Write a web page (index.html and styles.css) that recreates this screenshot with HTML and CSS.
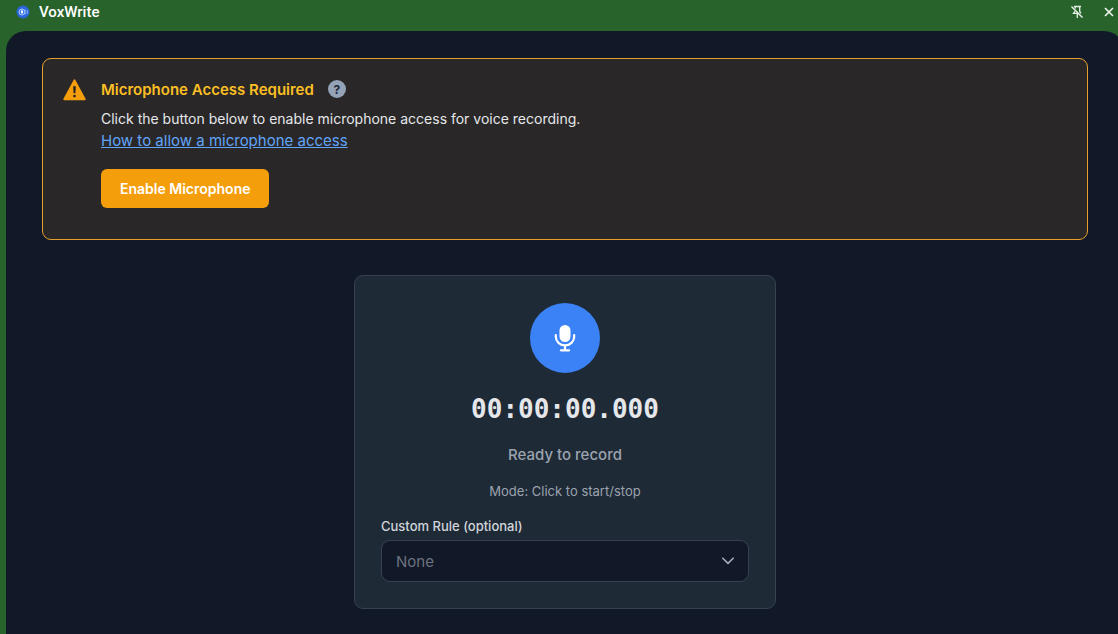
FILE: index.html
```html
<!DOCTYPE html>
<html lang="en">
  <head>
    <meta charset="utf-8" />
    <meta name="viewport" content="width=device-width, initial-scale=1" />
    <title>VoxWrite</title>
    <link rel="stylesheet" href="styles.css">
  </head>
  <body>
    <header class="titlebar">
      <svg class="logo" viewBox="0 0 14 14" aria-hidden="true">
        <circle cx="7" cy="7" r="6.5" fill="#2b66dc" />
        <circle cx="6" cy="7" r="3" fill="#3f7bea" stroke="#a9c8fa" stroke-width="1" />
        <rect x="5" y="5.2" width="2" height="3.4" rx="1" fill="#fff" />
        <path d="M9.8 4.5v5M11.6 5.2v3.6" stroke="#8bb4f8" stroke-width="0.8" fill="none" />
      </svg>
      <span class="app-name">VoxWrite</span>
      <button class="bar-button" type="button" aria-label="Unpin">
        <svg width="14" height="14" viewBox="0 0 14 14" fill="none" stroke="#e6efe6" stroke-width="1.3">
          <path d="M4 1.5h7M5.3 1.5v2M9.7 1.5v5l1.3 1.8M5 6.3L3.5 8.3h4.8M7.3 8.3v4.7" />
          <path d="M1.5 1.5l11 11" stroke-width="1.5" />
        </svg>
      </button>
      <button class="bar-button" type="button" aria-label="Close">
        <svg width="10" height="10" viewBox="0 0 10 10" stroke="#f2f7f2" stroke-width="1.6">
          <path d="M1 1l8 8M9 1l-8 8" />
        </svg>
      </button>
    </header>

    <main class="panel">
      <section class="notice">
        <svg class="warning" viewBox="0 0 22 21" aria-hidden="true">
          <path d="M11 1.3L20.7 19.3H1.3z" fill="#f59e0b" stroke="#f59e0b" stroke-width="2" stroke-linejoin="round" />
          <path d="M9.7 7h2.6l-.4 6.6h-1.8z" fill="#292524" />
          <circle cx="11" cy="16.3" r="1.3" fill="#292524" />
        </svg>
        <div class="notice-body">
          <div class="notice-head">
            <h2>Microphone Access Required</h2>
            <button class="help" type="button">?</button>
          </div>
          <p>Click the button below to enable microphone access for voice recording.</p>
          <a class="help-link" href="#">How to allow a microphone access</a>
          <button class="enable" type="button">Enable Microphone</button>
        </div>
      </section>

      <section class="recorder">
        <button class="record" type="button" aria-label="Record">
          <svg width="22" height="28" viewBox="0 0 22 28" fill="none" stroke="#fff" stroke-width="2.2" stroke-linecap="round">
            <rect x="5.5" y="1" width="11" height="17" rx="5.5" fill="#fff" stroke="none" />
            <path d="M1.8 11v1.8a9.2 8.6 0 0 0 18.4 0V11M11 21.5v4.5M6.9 26.3h8.2" />
          </svg>
        </button>
        <div class="timer">00:00:00.000</div>
        <div class="status">Ready to record</div>
        <div class="mode">Mode: Click to start/stop</div>
        <label for="rule">Custom Rule (optional)</label>
        <div class="select-wrap">
          <select id="rule">
            <option>None</option>
          </select>
          <svg class="chevron" width="14" height="8" viewBox="0 0 14 8" fill="none" stroke="#a5adba" stroke-width="1.6" stroke-linecap="round" stroke-linejoin="round">
            <path d="M1.8 1.2L7 6.4l5.2-5.2" />
          </svg>
        </div>
      </section>
    </main>
  </body>
</html>
```

FILE: styles.css
```css
* {
  box-sizing: border-box;
}

body {
  display: flex;
  flex-direction: column;
  min-height: 100vh;
  margin: 0;
  overflow: hidden;
  background-color: #28632c;
  font-family: Inter, "Liberation Sans", sans-serif;
  color: #e5e7eb;
}

button {
  padding: 0;
  border: none;
  font-family: inherit;
  cursor: pointer;
}

.titlebar {
  display: flex;
  align-items: center;
  height: 31px;
  padding: 0 4px 7px 16px;
}

.logo {
  width: 14px;
  height: 14px;
}

.app-name {
  flex: 1;
  margin-left: 9px;
  font-family: Roboto, "Liberation Sans", sans-serif;
  font-size: 15px;
  font-weight: 500;
  color: #fff;
}

.bar-button {
  display: flex;
  margin-left: 20px;
  background: none;
}

/* the right edge runs under the window frame */
.panel {
  flex: 1;
  margin: 0 -6px 0 6px;
  padding: 27px 36px 25px;
  border-radius: 20px 20px 0 0;
  background-color: #111827;
}

.notice {
  display: flex;
  gap: 15px;
  padding: 20px 20px 31px;
  border: 1px solid #e5a02c;
  border-radius: 9px;
  background-color: #292727;
}

.warning {
  width: 23px;
  height: 22px;
}

.notice-body {
  display: flex;
  flex-direction: column;
  align-items: flex-start;
}

.notice-head {
  display: flex;
  align-items: center;
  gap: 14px;
  height: 20px;
}

.notice h2 {
  margin: 0;
  font-size: 15px;
  font-weight: 600;
  color: #fbbf24;
}

.help {
  width: 18px;
  height: 18px;
  border-radius: 50%;
  background-color: #94a3b8;
  font-size: 12px;
  font-weight: 700;
  color: #1f2937;
}

.notice p {
  margin: 9px 0 0;
  font-size: 14px;
  line-height: 22px;
}

.help-link {
  font-size: 15px;
  line-height: 22px;
  color: #60a5fa;
}

.enable {
  margin-top: 17px;
  padding: 0 19px;
  border-radius: 6px;
  background-color: #f59e0b;
  font-size: 14px;
  font-weight: 600;
  line-height: 39px;
  color: #fff;
}

.recorder {
  display: flex;
  flex-direction: column;
  align-items: center;
  max-width: 422px;
  margin: 35px auto 0;
  padding: 27px 26px 26px;
  border: 1px solid #374151;
  border-radius: 9px;
  background-color: #1e2a36;
}

.record {
  display: flex;
  align-items: center;
  justify-content: center;
  width: 70px;
  height: 70px;
  border-radius: 50%;
  background-color: #3b82f6;
}

.timer {
  margin-top: 18px;
  font-family: "DejaVu Sans Mono", monospace;
  font-size: 26px;
  font-weight: 700;
  line-height: 36px;
}

.status {
  margin-top: 17px;
  font-size: 15px;
  font-weight: 500;
  line-height: 22px;
  color: #9ca3af;
}

.mode {
  margin-top: 15px;
  font-size: 13px;
  line-height: 20px;
  color: #9ca3af;
}

.recorder label {
  align-self: flex-start;
  margin-top: 15px;
  font-size: 13px;
  font-weight: 500;
  line-height: 20px;
  color: #d1d5db;
}

.select-wrap {
  display: grid;
  align-items: center;
  width: 100%;
  margin-top: 4px;
}

.select-wrap select,
.chevron {
  grid-area: 1 / 1;
}

.select-wrap select {
  width: 100%;
  height: 42px;
  padding: 0 14px;
  border: 1px solid #374151;
  border-radius: 9px;
  appearance: none;
  background-color: #111827;
  font-family: inherit;
  font-size: 15px;
  color: #6b7280;
}

.chevron {
  justify-self: end;
  margin-right: 14px;
  pointer-events: none;
}
```
